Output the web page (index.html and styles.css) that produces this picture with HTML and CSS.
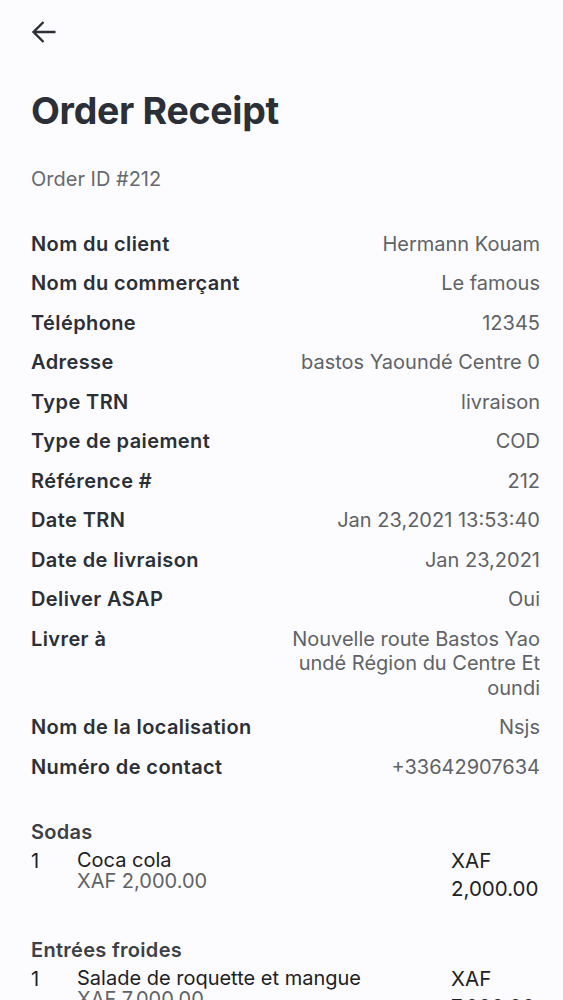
FILE: index.html
```html
<!DOCTYPE html>
<html lang="fr">
<head>
    <meta charset="UTF-8">
    <meta name="viewport" content="width=device-width, initial-scale=1.0">
    <title>Order Receipt</title>
    <link rel="stylesheet" href="styles.css">
</head>
<body>

    <header class="top-bar">
        <button class="back-btn" aria-label="Retour">
            <svg width="26" height="26" viewBox="0 0 26 26">
                <path d="M24.5 13H2.5 M12.5 3 L2.5 13 L12.5 23" fill="none" stroke="#2b2f38" stroke-width="2.4"></path>
            </svg>
        </button>
    </header>

    <main class="receipt">
        <h1 class="title">Order Receipt</h1>
        <p class="order-id">Order ID #212</p>

        <!-- Order details -->
        <dl class="details">
            <div class="row"><dt>Nom du client</dt><dd>Hermann Kouam</dd></div>
            <div class="row"><dt>Nom du commerçant</dt><dd>Le famous</dd></div>
            <div class="row"><dt>Téléphone</dt><dd>12345</dd></div>
            <div class="row"><dt>Adresse</dt><dd>bastos Yaoundé Centre 0</dd></div>
            <div class="row"><dt>Type TRN</dt><dd>livraison</dd></div>
            <div class="row"><dt>Type de paiement</dt><dd>COD</dd></div>
            <div class="row"><dt>Référence #</dt><dd>212</dd></div>
            <div class="row"><dt>Date TRN</dt><dd>Jan 23,2021 13:53:40</dd></div>
            <div class="row"><dt>Date de livraison</dt><dd>Jan 23,2021</dd></div>
            <div class="row"><dt>Deliver ASAP</dt><dd>Oui</dd></div>
            <div class="row"><dt>Livrer à</dt><dd>Nouvelle route Bastos Yao<br>undé Région du Centre Et<br>oundi</dd></div>
            <div class="row"><dt>Nom de la localisation</dt><dd>Nsjs</dd></div>
            <div class="row"><dt>Numéro de contact</dt><dd>+33642907634</dd></div>
        </dl>

        <!-- Items -->
        <section class="category">
            <h2>Sodas</h2>
            <div class="item">
                <span class="qty">1</span>
                <div class="item-info">
                    <span class="item-name">Coca cola</span>
                    <span class="item-unit">XAF 2,000.00</span>
                </div>
                <div class="item-price">XAF<br>2,000.00</div>
            </div>
        </section>

        <section class="category">
            <h2>Entrées froides</h2>
            <div class="item">
                <span class="qty">1</span>
                <div class="item-info">
                    <span class="item-name">Salade de roquette et mangue</span>
                    <span class="item-unit">XAF 7,000.00</span>
                </div>
                <div class="item-price">XAF<br>7,000.00</div>
            </div>
        </section>
    </main>

</body>
</html>
```

FILE: styles.css
```css
body {
    font-family: Inter, "Open Sans", sans-serif;
    background-color: #fcfcfe;
    color: #2b2f38;
    margin: 0;
    padding: 0 23px 0 31px;
}

.top-bar {
    padding-top: 19px;
    height: 26px;
}

.back-btn {
    background: none;
    border: none;
    padding: 0;
    width: 26px;
    height: 26px;
    cursor: pointer;
}

.back-btn svg {
    display: block;
}

.title {
    font-size: 37.5px;
    font-weight: 700;
    letter-spacing: -0.3px;
    margin: 43px 0 0;
    line-height: 46px;
}

.order-id {
    color: #666a70;
    font-size: 20px;
    margin: 32px 0 0;
    line-height: 26px;
}

.details {
    margin: 32px 0 0;
}

.row {
    display: flex;
    justify-content: space-between;
    align-items: flex-start;
    padding: 7.5px 0;
    font-size: 20px;
    line-height: 24.5px;
}

.row dt {
    font-weight: 600;
    letter-spacing: 0.4px;
    color: #2b2f38;
}

.row dd {
    margin: 0;
    color: #5f6368;
    text-align: right;
}

.category {
    margin-top: 33px;
}

.category + .category {
    margin-top: 35px;
}

.category h2 {
    font-size: 20px;
    font-weight: 600;
    letter-spacing: 0.3px;
    color: #3c4047;
    margin: 0 0 5px;
    line-height: 24px;
}

.item {
    display: flex;
    font-size: 20px;
    color: #202124;
}

.qty {
    width: 46px;
    line-height: 24px;
}

.item-info {
    flex: 1;
    display: flex;
    flex-direction: column;
}

.item-name {
    line-height: 22px;
}

.item-unit {
    color: #5f6368;
    line-height: 21px;
}

.item-price {
    width: 89px;
    font-size: 20.5px;
    line-height: 28px;
    margin-top: -2px;
}
```
